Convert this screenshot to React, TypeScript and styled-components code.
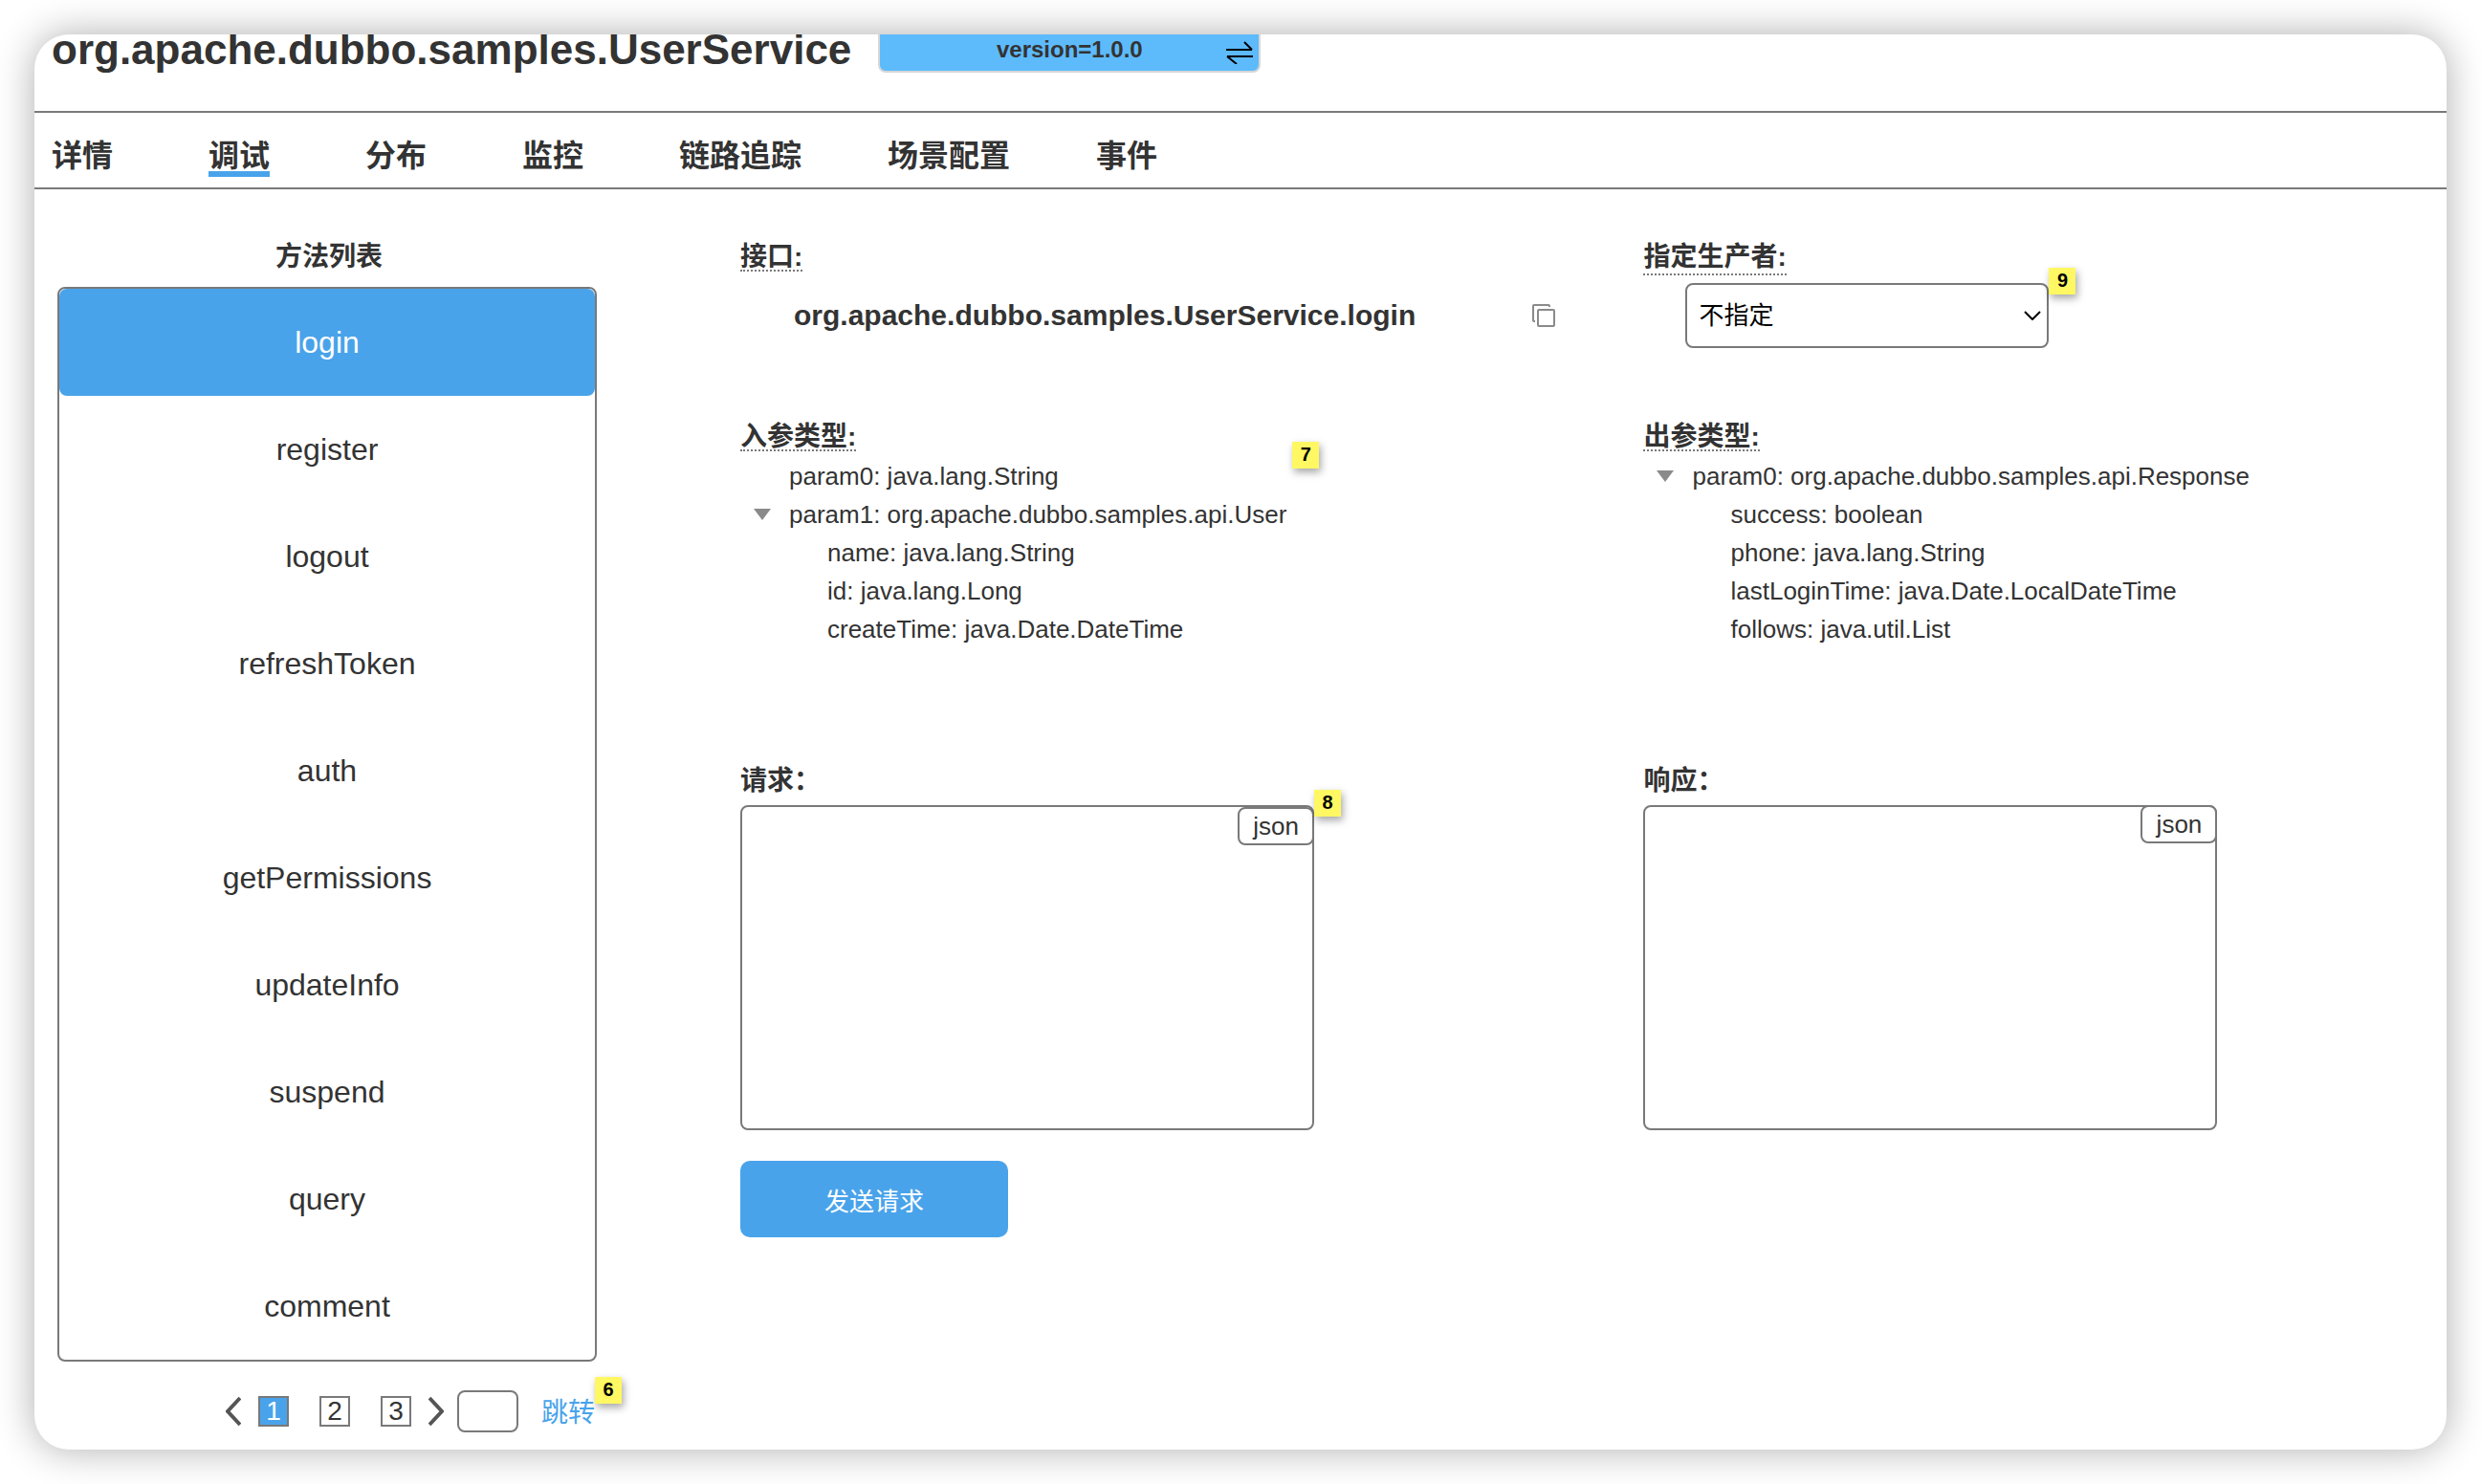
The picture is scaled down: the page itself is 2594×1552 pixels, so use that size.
import { useState } from "react";
import styled, { createGlobalStyle, css } from "styled-components";

const color = {
  text: "#333333",
  line: "#797979",
  blue: "#49a3ea",
  badge: "#5dbbfc",
  note: "#fff863",
};

const GlobalStyle = createGlobalStyle`
  *, *::before, *::after { box-sizing: border-box; }
  body {
    margin: 0;
    background: #ffffff;
    color: ${color.text};
    font-family: "Liberation Sans", Arial, "Noto Sans CJK SC", sans-serif;
    font-size: 26px;
  }
  button, input, select, textarea { font: inherit; color: inherit; margin: 0; }
  ul, ol { list-style: none; margin: 0; padding: 0; }
  h1, h2, p { margin: 0; }
`;

const Page = styled.div`
  padding: 36px;
`;

const Card = styled.div`
  min-height: calc(100vh - 72px);
  overflow: hidden;
  border-radius: 36px;
  background: #ffffff;
  box-shadow: 0 0 40px rgba(0, 0, 0, 0.32);
`;

const Header = styled.header`
  display: flex;
  align-items: center;
  gap: 28px;
  margin-top: -8px;
  padding: 0 18px 40px;
  border-bottom: 2px solid ${color.line};
`;

const Title = styled.h1`
  font-size: 44px;
  line-height: 48px;
`;

const VersionButton = styled.button`
  display: grid;
  grid-template-columns: 28px 1fr 28px;
  align-items: center;
  width: 400px;
  height: 48px;
  padding: 0 6px;
  border: 2px solid #d7d7d7;
  border-radius: 8px;
  background: ${color.badge};
  font-size: 24px;
  font-weight: 700;

  span { grid-column: 2; }
  svg { margin-top: 6px; }
`;

const Tabs = styled.nav`
  display: flex;
  gap: 90px;
  padding: 26px 18px 11px;
  border-bottom: 2px solid ${color.line};
`;

const TabCell = styled.div`
  display: flex;
  min-width: 74px;
`;

const Tab = styled.a<{ $active: boolean }>`
  padding-top: 4px;
  border-bottom: 6px solid ${(p) => (p.$active ? color.blue : "transparent")};
  font-size: 32px;
  font-weight: 700;
  line-height: 31px;
  color: inherit;
  text-decoration: none;
`;

const Body = styled.main`
  display: grid;
  grid-template-columns: 564px minmax(0, 1fr);
  gap: 150px;
  padding: 54px 0 18px 24px;
`;

const Methods = styled.aside`
  display: flex;
  flex-direction: column;
`;

const labelText = css`
  padding-top: 4px;
  font-size: 28px;
  font-weight: 700;
  line-height: 26px;
`;

const MethodsTitle = styled.h2`
  ${labelText}
  padding-left: 4px;
  text-align: center;
`;

const MethodList = styled.ul`
  margin-top: 18px;
  border: 2px solid ${color.line};
  border-radius: 8px;
`;

const MethodButton = styled.button<{ $active: boolean }>`
  display: block;
  width: 100%;
  height: 112px;
  padding: 0;
  border: 0;
  border-radius: 8px;
  background: ${(p) => (p.$active ? color.blue : "transparent")};
  color: ${(p) => (p.$active ? "#ffffff" : color.text)};
  font-size: 32px;
`;

const Pager = styled.nav`
  display: flex;
  align-items: center;
  justify-content: flex-end;
  margin: 30px 2px 0 0;
`;

const PageList = styled.ol`
  display: flex;
  gap: 32px;
  margin: 0 18px;
`;

const IconButton = styled.button`
  display: flex;
  padding: 0;
  border: 0;
  background: none;
`;

const PageButton = styled.button<{ $active: boolean }>`
  display: block;
  width: 32px;
  height: 32px;
  padding: 0;
  border: 2px solid ${color.line};
  background: ${(p) => (p.$active ? color.blue : "#ffffff")};
  color: ${(p) => (p.$active ? "#ffffff" : color.text)};
  font-size: 28px;
  line-height: 28px;
`;

const PageInput = styled.input`
  width: 64px;
  height: 44px;
  margin: 0 24px 0 14px;
  padding: 0 8px;
  border: 2px solid ${color.line};
  border-radius: 8px;
  background: #ffffff;
  text-align: center;
`;

const JumpLink = styled.a`
  display: block;
  padding-top: 4px;
  color: ${color.blue};
  font-size: 28px;
  line-height: 36px;
  text-decoration: none;
`;

const Anchor = styled.div`
  position: relative;
  width: fit-content;
`;

const Note = styled.span<{ $gap?: number }>`
  position: absolute;
  top: -16px;
  left: 100%;
  width: 28px;
  height: 28px;
  margin-left: ${(p) => p.$gap ?? 0}px;
  background: ${color.note};
  box-shadow: 2px 4px 8px rgba(0, 0, 0, 0.35);
  color: #000000;
  font-size: 20px;
  font-weight: 700;
  line-height: 26px;
  text-align: center;
`;

const Panel = styled.div`
  display: grid;
  grid-template-columns: 9fr 8fr;
  grid-template-rows: minmax(188px, auto) minmax(360px, auto) auto;
  align-content: start;
`;

const FieldName = styled.h2`
  ${labelText}
  width: fit-content;
  border-bottom: 2px dotted ${color.line};
`;

const FieldLabel = styled.label`
  ${labelText}
  display: block;
  width: fit-content;
  padding-bottom: 4px;
  border-bottom: 2px dotted ${color.line};
`;

const InterfaceRow = styled.div`
  display: flex;
  align-items: center;
  gap: 122px;
  margin-top: 26px;
  padding-left: 56px;
`;

const InterfaceName = styled.p`
  font-size: 30px;
  font-weight: 700;
  line-height: 40px;
`;

const SelectBox = styled(Anchor)`
  display: flex;
  align-items: center;
  margin: 8px 0 0 44px;

  > svg {
    position: absolute;
    right: 8px;
    pointer-events: none;
  }
`;

const Select = styled.select`
  appearance: none;
  width: 380px;
  height: 68px;
  padding: 0 40px 0 12px;
  border: 2px solid ${color.line};
  border-radius: 8px;
  background: #ffffff;
  color: #000000;
`;

const TreeBox = styled(Anchor)`
  margin-top: 6px;
`;

const TreeRow = styled.div`
  display: grid;
  grid-template-columns: 20px auto;
  column-gap: 18px;
  align-items: center;
  padding-left: 13px;
  line-height: 40px;

  > span { grid-column: 2; }
`;

const TreeChildren = styled.ul`
  padding-left: 91px;
  line-height: 40px;
`;

const EditorLabel = styled.label`
  ${labelText}
  display: block;
`;

const EditorBox = styled(Anchor)`
  margin-top: 12px;
`;

const Editor = styled.textarea`
  display: block;
  width: 600px;
  height: 340px;
  padding: 12px 96px 12px 12px;
  border: 2px solid ${color.line};
  border-radius: 8px;
  background: #ffffff;
  resize: none;
`;

const FormatButton = styled.button<{ $top: number }>`
  position: absolute;
  top: ${(p) => p.$top}px;
  right: 0;
  width: 80px;
  height: 40px;
  padding: 0;
  border: 2px solid ${color.line};
  border-radius: 8px;
  background: #ffffff;
`;

const SendButton = styled.button`
  width: 280px;
  height: 80px;
  margin-top: 32px;
  padding: 0;
  border: 0;
  border-radius: 10px;
  background: ${color.blue};
  color: #ffffff;
`;

const SwapIcon = () => (
  <svg width="28" height="24" viewBox="0 0 28 24" fill="none" stroke="#000" strokeWidth="2">
    <path d="M0 9h27M19 1l8 8M28 16H1M11 24l-10-8" />
  </svg>
);

const ChevronIcon = ({ flip = false }: { flip?: boolean }) => (
  <svg width="16" height="32" viewBox="0 0 16 32" fill="none" stroke="#555" strokeWidth="4">
    <path d={flip ? "M1 2l13 14L1 30" : "M15 2L2 16l13 14"} />
  </svg>
);

const SelectArrow = () => (
  <svg width="18" height="10" viewBox="0 0 18 10" fill="none" stroke="#000" strokeWidth="2">
    <path d="M1 1l8 8 8-8" />
  </svg>
);

const CopyIcon = () => (
  <svg width="24" height="24" viewBox="0 0 24 24" fill="none" stroke="#8a8a8a" strokeWidth="2">
    <path d="M3 18H2a1 1 0 0 1-1-1V2a1 1 0 0 1 1-1h15a1 1 0 0 1 1 1v1" />
    <rect x="6" y="6" width="17" height="17" rx="1" />
  </svg>
);

const CaretIcon = () => (
  <svg width="20" height="12" viewBox="0 0 20 12">
    <path d="M1 0h18l-9 12z" fill="#8a8a8a" />
  </svg>
);

const tabs = ["详情", "调试", "分布", "监控", "链路追踪", "场景配置", "事件"];

const methods = [
  "login", "register", "logout", "refreshToken", "auth",
  "getPermissions", "updateInfo", "suspend", "query", "comment",
];

type Param = { text: string; children?: string[] };

const inputs: Param[] = [
  { text: "param0: java.lang.String" },
  {
    text: "param1: org.apache.dubbo.samples.api.User",
    children: ["name: java.lang.String", "id: java.lang.Long", "createTime: java.Date.DateTime"],
  },
];

const outputs: Param[] = [
  {
    text: "param0: org.apache.dubbo.samples.api.Response",
    children: [
      "success: boolean",
      "phone: java.lang.String",
      "lastLoginTime: java.Date.LocalDateTime",
      "follows: java.util.List",
    ],
  },
];

function TypeTree({ params }: { params: Param[] }) {
  const [closed, setClosed] = useState<string[]>([]);
  const toggle = (key: string) =>
    setClosed((c) => (c.includes(key) ? c.filter((k) => k !== key) : [...c, key]));
  return (
    <ul>
      {params.map(({ text, children }) => (
        <li key={text}>
          <TreeRow>
            {children && (
              <IconButton type="button" aria-label="展开或收起" onClick={() => toggle(text)}>
                <CaretIcon />
              </IconButton>
            )}
            <span>{text}</span>
          </TreeRow>
          {children && !closed.includes(text) && (
            <TreeChildren>
              {children.map((c) => <li key={c}>{c}</li>)}
            </TreeChildren>
          )}
        </li>
      ))}
    </ul>
  );
}

export default function App() {
  const [tab, setTab] = useState("调试");
  const [method, setMethod] = useState("login");
  const [page, setPage] = useState(1);

  return (
    <Page>
      <GlobalStyle />
      <Card>
        <Header>
          <Title>org.apache.dubbo.samples.UserService</Title>
          <VersionButton type="button">
            <span>version=1.0.0</span>
            <SwapIcon />
          </VersionButton>
        </Header>

        <Tabs>
          {tabs.map((t) => (
            <TabCell key={t}>
              <Tab href="#" $active={t === tab} onClick={() => setTab(t)}>{t}</Tab>
            </TabCell>
          ))}
        </Tabs>

        <Body>
          <Methods>
            <MethodsTitle>方法列表</MethodsTitle>
            <MethodList>
              {methods.map((m) => (
                <li key={m}>
                  <MethodButton type="button" $active={m === method} onClick={() => setMethod(m)}>
                    {m}
                  </MethodButton>
                </li>
              ))}
            </MethodList>
            <Pager>
              <IconButton type="button" aria-label="上一页"><ChevronIcon /></IconButton>
              <PageList>
                {[1, 2, 3].map((n) => (
                  <li key={n}>
                    <PageButton type="button" $active={n === page} onClick={() => setPage(n)}>
                      {n}
                    </PageButton>
                  </li>
                ))}
              </PageList>
              <IconButton type="button" aria-label="下一页"><ChevronIcon flip /></IconButton>
              <PageInput type="text" aria-label="页码" />
              <Anchor>
                <JumpLink href="#">跳转</JumpLink>
                <Note>6</Note>
              </Anchor>
            </Pager>
          </Methods>

          <Panel>
            <section>
              <FieldName>接口:</FieldName>
              <InterfaceRow>
                <InterfaceName>org.apache.dubbo.samples.UserService.{method}</InterfaceName>
                <IconButton type="button" aria-label="复制"><CopyIcon /></IconButton>
              </InterfaceRow>
            </section>

            <section>
              <FieldLabel htmlFor="producer">指定生产者:</FieldLabel>
              <SelectBox>
                <Select id="producer">
                  <option>不指定</option>
                </Select>
                <SelectArrow />
                <Note>9</Note>
              </SelectBox>
            </section>

            <section>
              <FieldName>入参类型:</FieldName>
              <TreeBox>
                <TypeTree params={inputs} />
                <Note $gap={6}>7</Note>
              </TreeBox>
            </section>

            <section>
              <FieldName>出参类型:</FieldName>
              <TreeBox>
                <TypeTree params={outputs} />
              </TreeBox>
            </section>

            <section>
              <EditorLabel htmlFor="request">请求：</EditorLabel>
              <EditorBox>
                <Editor id="request" />
                <FormatButton type="button" $top={2}>json</FormatButton>
                <Note>8</Note>
              </EditorBox>
              <SendButton type="button">发送请求</SendButton>
            </section>

            <section>
              <EditorLabel htmlFor="response">响应：</EditorLabel>
              <EditorBox>
                <Editor id="response" readOnly />
                <FormatButton type="button" $top={0}>json</FormatButton>
              </EditorBox>
            </section>
          </Panel>
        </Body>
      </Card>
    </Page>
  );
}
